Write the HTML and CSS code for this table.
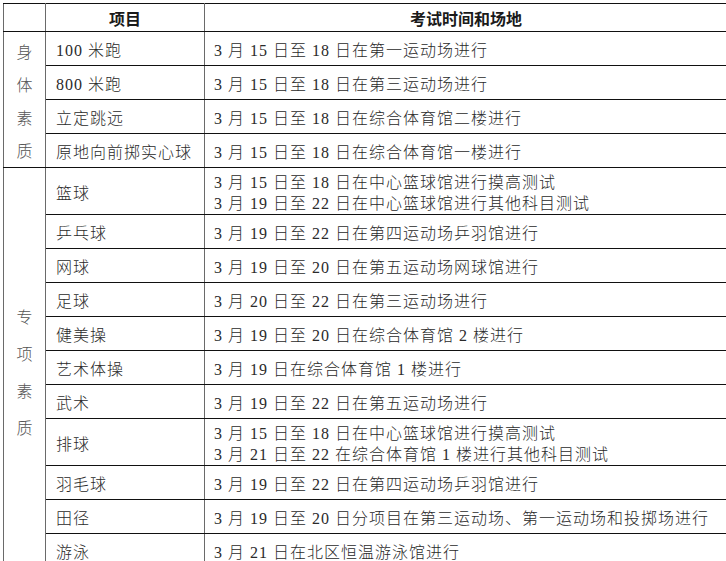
FILE: index.html
```html
<!DOCTYPE html>
<html lang="zh-CN">
<head>
<meta charset="utf-8">
<title>考试时间和场地</title>
<link rel="stylesheet" href="styles.css">
</head>
<body>
<div class="page">
<table class="sched">
  <colgroup>
    <col class="c-group">
    <col class="c-item">
    <col class="c-info">
  </colgroup>
  <thead>
    <tr class="head">
      <th></th>
      <th>项目</th>
      <th>考试时间和场地</th>
    </tr>
  </thead>
  <tbody>
    <tr class="one">
      <td class="grp g1" rowspan="4">身<br>体<br>素<br>质</td>
      <td class="item">100 米跑</td>
      <td class="info">3 月 15 日至 18 日在第一运动场进行</td>
    </tr>
    <tr class="one">
      <td class="item">800 米跑</td>
      <td class="info">3 月 15 日至 18 日在第三运动场进行</td>
    </tr>
    <tr class="one">
      <td class="item">立定跳远</td>
      <td class="info">3 月 15 日至 18 日在综合体育馆二楼进行</td>
    </tr>
    <tr class="one">
      <td class="item">原地向前掷实心球</td>
      <td class="info">3 月 15 日至 18 日在综合体育馆一楼进行</td>
    </tr>
    <tr class="two">
      <td class="grp g2" rowspan="11">专<br>项<br>素<br>质</td>
      <td class="item">篮球</td>
      <td class="info">3 月 15 日至 18 日在中心篮球馆进行摸高测试<br>3 月 19 日至 22 日在中心篮球馆进行其他科目测试</td>
    </tr>
    <tr class="one">
      <td class="item">乒乓球</td>
      <td class="info">3 月 19 日至 22 日在第四运动场乒羽馆进行</td>
    </tr>
    <tr class="one">
      <td class="item">网球</td>
      <td class="info">3 月 19 日至 20 日在第五运动场网球馆进行</td>
    </tr>
    <tr class="one">
      <td class="item">足球</td>
      <td class="info">3 月 20 日至 22 日在第三运动场进行</td>
    </tr>
    <tr class="one">
      <td class="item">健美操</td>
      <td class="info">3 月 19 日至 20 日在综合体育馆 2 楼进行</td>
    </tr>
    <tr class="one">
      <td class="item">艺术体操</td>
      <td class="info">3 月 19 日在综合体育馆 1 楼进行</td>
    </tr>
    <tr class="one">
      <td class="item">武术</td>
      <td class="info">3 月 19 日至 22 日在第五运动场进行</td>
    </tr>
    <tr class="two">
      <td class="item">排球</td>
      <td class="info">3 月 15 日至 18 日在中心篮球馆进行摸高测试<br>3 月 21 日至 22 在综合体育馆 1 楼进行其他科目测试</td>
    </tr>
    <tr class="one">
      <td class="item">羽毛球</td>
      <td class="info">3 月 19 日至 22 日在第四运动场乒羽馆进行</td>
    </tr>
    <tr class="one">
      <td class="item">田径</td>
      <td class="info">3 月 19 日至 20 日分项目在第三运动场、第一运动场和投掷场进行</td>
    </tr>
    <tr class="one">
      <td class="item">游泳</td>
      <td class="info">3 月 21 日在北区恒温游泳馆进行</td>
    </tr>
  </tbody>
</table>
</div>
</body>
</html>
```

FILE: styles.css
```css
html, body {
  margin: 0;
  padding: 0;
  background: #ffffff;
  overflow: hidden;
}

.page {
  padding: 3px 0 0 3px;
  width: 760px;
}

.sched {
  border-collapse: collapse;
  table-layout: fixed;
  width: 724px;
  font-family: "Liberation Serif", "Noto Sans CJK SC", serif;
  font-size: 16px;
  font-weight: 300;
  color: #2a2a2a;
  letter-spacing: 1px;
}

.c-group { width: 42px; }
.c-item { width: 159px; }
.c-info { width: 523px; }

.sched th,
.sched td {
  padding: 0;
  border-top: 1px solid #111;
  border-bottom: 1px solid #111;
  border-left: 1px solid #6a6a6a;
  border-right: 1px solid #6a6a6a;
}

.sched th {
  font-family: "Noto Sans CJK SC", sans-serif;
  font-weight: 700;
  font-size: 16px;
  letter-spacing: 0;
  color: #1a1a1a;
  text-align: center;
  height: 27px;
  line-height: 20px;
}

.sched .one td { height: 29px; }
.sched .two td { height: 42px; }

.sched td.item {
  padding: 4px 0 0 10px;
  line-height: 21px;
  vertical-align: middle;
  white-space: nowrap;
}

.sched td.info {
  padding: 4px 0 0 9px;
  line-height: 21px;
  vertical-align: middle;
  white-space: nowrap;
}

.sched td.grp {
  text-align: center;
  vertical-align: middle;
  color: #555;
  letter-spacing: 0;
  font-family: "Noto Sans CJK SC", sans-serif;
}

.sched td.g1 { line-height: 33px; padding-top: 2px; }
.sched td.g2 { line-height: 37px; padding-top: 8px; }
```
